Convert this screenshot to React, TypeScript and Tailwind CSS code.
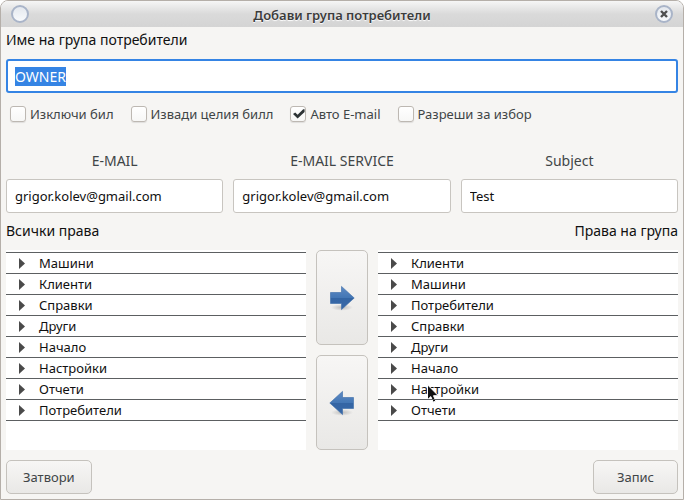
import { useEffect, useRef, useState } from "react";

const ALL_RIGHTS = ["Машини", "Клиенти", "Справки", "Други", "Начало", "Настройки", "Отчети", "Потребители"];
const GROUP_RIGHTS = ["Клиенти", "Машини", "Потребители", "Справки", "Други", "Начало", "Настройки", "Отчети"];

const FIELDS = [
  { id: "email", label: "E-MAIL", value: "grigor.kolev@gmail.com" },
  { id: "email-service", label: "E-MAIL SERVICE", value: "grigor.kolev@gmail.com" },
  { id: "subject", label: "Subject", value: "Test" },
];

const OPTIONS = [
  { id: "disable-bill", label: "Изключи бил", checked: false },
  { id: "whole-bill", label: "Извади целия билл", checked: false },
  { id: "auto-email", label: "Авто E-mail", checked: true },
  { id: "allow-choice", label: "Разреши за избор", checked: false },
];

function TitleBar() {
  return (
    <header className="grid h-[26px] grid-cols-[1fr_auto_1fr] items-center bg-linear-to-b from-[#f6f6f6] via-[#dadada] to-[#d4d4d4] px-2.5">
      <button
        type="button"
        aria-label="Меню"
        className="size-[18px] rounded-full border-2 border-[#a9b4c8] bg-linear-to-b from-[#e4e8ee] to-[#f8fafc]"
      />
      <h1 className="pt-0.5 text-[13px] leading-[18px] font-semibold text-[#3c3c3c] [text-shadow:0_1px_1px_#fff]">
        Добави група потребители
      </h1>
      <button
        type="button"
        aria-label="Затвори прозореца"
        className="grid size-[18px] place-items-center justify-self-end rounded-full border-2 border-[#a9b4c8] bg-linear-to-b from-[#e4e8ee] to-[#f8fafc]"
      >
        <svg viewBox="0 0 10 10" className="size-[10px]" aria-hidden="true">
          <path d="M2 2 8 8M8 2 2 8" stroke="#505050" strokeWidth="2.4" />
        </svg>
      </button>
    </header>
  );
}

function Option({ id, label, checked }: { id: string; label: string; checked: boolean }) {
  const [on, setOn] = useState(checked);
  return (
    <label htmlFor={id} className="flex items-center gap-1 text-[13px] leading-[18px] text-[#3f4547]">
      <span className="grid size-4 *:col-start-1 *:row-start-1">
        <input
          id={id}
          type="checkbox"
          checked={on}
          onChange={(e) => setOn(e.target.checked)}
          className="size-4 appearance-none rounded-[3px] border border-[#bdb8b2] bg-linear-to-b from-white to-[#f7f7f6] shadow-[0_1px_1px_#00000018]"
        />
        {on && (
          <svg viewBox="0 0 16 16" className="pointer-events-none size-4" aria-hidden="true">
            <path d="M3 8 5.2 6.6 7.6 8.8 13.2 3.2 14.6 3.2 14.6 6 7.6 12.6Z" fill="#2e3436" />
          </svg>
        )}
      </span>
      {label}
    </label>
  );
}

function Cursor() {
  return (
    <svg viewBox="0 0 12 19" className="pointer-events-none absolute top-[5px] left-[49px] h-[19px] w-3" aria-hidden="true">
      <path d="M.5.8v15l3.3-3.2 2.4 5.6 2.6-1.1-2.3-5.4h4.8Z" fill="#111" stroke="#fff" strokeWidth="1" />
    </svg>
  );
}

function RightsTree({ label, items, hovered }: { label: string; items: string[]; hovered?: string }) {
  return (
    <ul aria-label={label} className="bg-white pt-0.5">
      {items.map((item) => (
        <li key={item} className="relative border-t border-[#5c5f61] last:border-b">
          <button type="button" className="flex h-5 w-full items-center gap-[14px] pl-[13px] text-left text-[13px] leading-5 text-[#101010]">
            <svg viewBox="0 0 6 11" className="h-[11px] w-1.5" aria-hidden="true">
              <path d="M0 0 6 5.5 0 11Z" fill="#4a4a4a" />
            </svg>
            {item}
          </button>
          {item === hovered && <Cursor />}
        </li>
      ))}
    </ul>
  );
}

function ArrowIcon({ left }: { left?: boolean }) {
  return (
    <svg viewBox="0 0 26 26" className="size-[26px]" aria-hidden="true">
      <defs>
        <linearGradient id="arrow-fill" x1="0" y1="0" x2="0" y2="1">
          <stop offset="0" stopColor="#5e8ac4" />
          <stop offset=".48" stopColor="#4477b5" />
          <stop offset=".52" stopColor="#3465a4" />
          <stop offset="1" stopColor="#3868a8" />
        </linearGradient>
        <radialGradient id="arrow-shade">
          <stop offset="0" stopColor="#000" stopOpacity=".2" />
          <stop offset="1" stopColor="#000" stopOpacity="0" />
        </radialGradient>
      </defs>
      <ellipse cx="13" cy="22.5" rx="11" ry="3.3" fill="url(#arrow-shade)" />
      <path
        d={left ? "M.8 13 13.5 1.4V7.5H24.5V18.5H13.5V24.6Z" : "M25.2 13 12.5 1.4V7.5H1.5V18.5H12.5V24.6Z"}
        fill="url(#arrow-fill)"
        stroke="#386aa8"
        strokeWidth=".6"
      />
    </svg>
  );
}

const BUTTON = "rounded-[5px] border border-[#c5c2bd] bg-linear-to-b from-[#f7f6f5] to-[#e9e8e6] text-[13px] leading-[18px] text-[#3f4547]";
const HEADING = "text-sm leading-5 text-[#101010]";

export default function App() {
  const nameRef = useRef<HTMLInputElement>(null);

  useEffect(() => {
    nameRef.current?.focus();
    nameRef.current?.select();
  }, []);

  return (
    <div className="bg-white font-['Noto_Sans',sans-serif]">
      <form
        onSubmit={(e) => e.preventDefault()}
        className="flex min-h-screen flex-col overflow-hidden rounded-t-lg border border-[#b5afa9] bg-[#f6f5f3]"
      >
        <TitleBar />
        <main className="flex grow flex-col px-[5px] pt-[3px] pb-[5px]">
          <label htmlFor="group-name" className={HEADING}>
            Име на група потребители
          </label>
          <input
            ref={nameRef}
            id="group-name"
            defaultValue="OWNER"
            className="mt-[9px] h-[34px] w-full rounded-[3px] border-2 border-[#3584e4] bg-white px-[7px] text-sm leading-[17px] text-[#101010] outline-none selection:bg-[#3584e4] selection:text-white"
          />
          <div className="mt-3 flex items-center gap-[17px] px-1">
            {OPTIONS.map((o) => (
              <Option key={o.id} {...o} />
            ))}
          </div>
          <div className="mt-7 grid grid-cols-3 gap-2.5">
            {FIELDS.map((f) => (
              <div key={f.id} className="flex flex-col gap-2">
                <label htmlFor={f.id} className="text-center text-sm leading-5 text-[#3f4547]">
                  {f.label}
                </label>
                <input
                  id={f.id}
                  defaultValue={f.value}
                  className="h-[34px] w-full rounded-[3px] border border-[#c8c5c0] bg-white px-2 text-[13px] leading-[17px] text-[#101010] outline-none"
                />
              </div>
            ))}
          </div>
          <div className="mt-2 flex justify-between">
            <h2 className={HEADING}>Всички права</h2>
            <h2 className={HEADING}>Права на група</h2>
          </div>
          <div className="mt-[9px] grid grow grid-cols-[1fr_52px_1fr] gap-2.5">
            <RightsTree label="Всички права" items={ALL_RIGHTS} />
            <div className="grid grid-rows-2 gap-2.5">
              <button type="button" aria-label="Добави" className={`${BUTTON} grid place-items-center`}>
                <ArrowIcon />
              </button>
              <button type="button" aria-label="Премахни" className={`${BUTTON} grid place-items-center`}>
                <ArrowIcon left />
              </button>
            </div>
            <RightsTree label="Права на група" items={GROUP_RIGHTS} hovered="Настройки" />
          </div>
          <footer className="mt-2.5 flex justify-between">
            <button type="button" className={`${BUTTON} h-[34px] px-4`}>
              Затвори
            </button>
            <button type="submit" className={`${BUTTON} h-[34px] px-[23px]`}>
              Запис
            </button>
          </footer>
        </main>
      </form>
    </div>
  );
}
